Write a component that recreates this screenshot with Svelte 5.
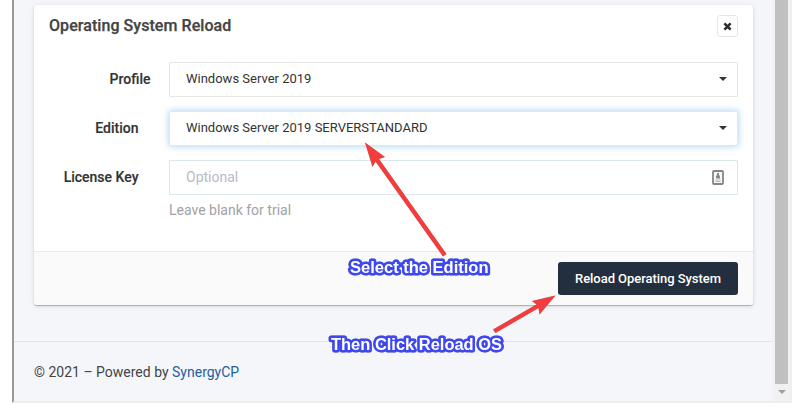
<script>
  const rows = [
    { label: 'Profile', value: 'Windows Server 2019', kind: 'select', wide: true },
    { label: 'Edition', value: 'Windows Server 2019 SERVERSTANDARD', kind: 'select', focused: true },
    { label: 'License Key', value: 'Optional', kind: 'input' }
  ];
</script>

<div class="page">
  <div class="frame">
    <main>
      <section class="card">
        <header>
          <h1>Operating System Reload</h1>
          <button class="close" aria-label="Close">
            <svg width="9" height="9" viewBox="0 0 9 9"><path d="M1.4 1.4 7.6 7.6M7.6 1.4 1.4 7.6" stroke="#2b2b2b" stroke-width="2.5" /></svg>
          </button>
        </header>
        <div class="form">
          {#each rows as row}
            <div class="row">
              <div class="label" class:wide={row.wide}>{row.label}</div>
              <div class="field {row.kind}" class:focused={row.focused}>
                <span>{row.value}</span>
                {#if row.kind === 'select'}
                  <svg class="caret" width="8" height="4" viewBox="0 0 8 4"><path d="M0 0H8L4 4Z" fill="#333" /></svg>
                {:else}
                  <svg class="key" width="12" height="15" viewBox="0 0 12 15">
                    <rect x="1" y="1" width="10" height="13" rx="1" fill="#f7f7f7" stroke="#858585" stroke-width="1.8" />
                    <path d="M5 3h2v2.500h1V8.500H4V5.500h1Z" fill="#888" />
                    <path d="M3.500 10h5M3.500 11.500h5" stroke="#bbb" />
                  </svg>
                {/if}
              </div>
            </div>
          {/each}
          <p class="help">Leave blank for trial</p>
        </div>
        <footer><button class="reload">Reload Operating System</button></footer>
      </section>
      <div class="copyright"><span>© 2021 – Powered by <a href="#top">SynergyCP</a></span></div>
    </main>
    <aside>
      <div class="thumb"></div>
      <svg width="8" height="4" viewBox="0 0 8 4"><path d="M0 0H8L4 4Z" fill="#a0a0a0" /></svg>
    </aside>
  </div>

  <svg class="notes" width="803" height="413" viewBox="0 0 803 413">
    <g class="arrows">
      <path d="M365 142.500 385 157 379 159 446.500 254 443 256.500 375.500 161.500 372.500 167Z" />
      <path d="M555.500 295.500 539.500 314.500 538.500 308 495.500 333 493 329.500 536.500 304.500 532 301Z" />
    </g>
    <text x="350" y="272.500" textLength="138.500" lengthAdjust="spacingAndGlyphs">Select the Edition</text>
    <text x="331" y="349.500" textLength="171" lengthAdjust="spacingAndGlyphs">Then Click Reload OS</text>
  </svg>
</div>

<style>
  :global(body) { margin: 0; background: #fff; }
  .page { position: relative; width: 803px; height: 413px; overflow: hidden; box-sizing: border-box; padding-left: 12px; font-family: Roboto, "Liberation Sans", sans-serif; color: #3a3f51; }
  .frame { box-sizing: border-box; width: 780px; height: 403px; display: flex; border: solid #eee; border-left-color: #999; border-width: 0 2px 2px; }
  main { width: 759px; height: 401px; background: #f5f6fa; padding-top: 5px; box-sizing: border-box; }
  .card { box-sizing: border-box; width: 719px; height: 300px; margin-left: 20px; background: #fff; border-radius: 3px; box-shadow: 0 1px 1px rgba(0,0,0,.25), 0 1px 5px rgba(0,0,0,.12); display: flex; flex-direction: column; }
  header { box-sizing: border-box; height: 57px; padding: 10px 15px 0; display: flex; justify-content: space-between; align-items: flex-start; }
  h1 { margin: 0; font-size: 16px; line-height: 22px; font-weight: 500; color: #444; letter-spacing: .06px; -webkit-text-stroke: .25px #444; }
  button { font-family: inherit; padding: 0; }
  .close { box-sizing: border-box; width: 21px; height: 22px; border: 1px solid #e6e6e6; border-radius: 3px; background: #fff; display: grid; place-items: center; }
  .form { height: 189px; display: flex; flex-direction: column; gap: 14px; }
  .row { display: flex; height: 35px; align-items: center; }
  .label { box-sizing: border-box; width: 135px; padding: 0 30.5px 2px 0; text-align: right; font-size: 14px; font-weight: 500; color: #333; white-space: nowrap; -webkit-text-stroke: .15px #333; }
  .label.wide { padding-right: 18.5px; }
  .field { box-sizing: border-box; width: 569px; height: 35px; border: 1px solid #e6e6e6; border-radius: 1px; padding: 0 10px 2px 16px; display: flex; align-items: center; justify-content: space-between; font-size: 13px; color: #333; background: #fff; }
  .caret { margin-top: 1px; }
  .field.focused { box-shadow: 0 0 7px rgba(102,175,233,.6); }
  .field.input { border-color: #dde6e9; color: #b7bac9; font-size: 14px; padding: 0 13px 0 16px; }
  .input span { padding-bottom: 2px; }
  .help { margin: -7px 0 0 135px; font-size: 14px; line-height: 16px; color: #a1a2a3; }
  footer { box-sizing: border-box; height: 54px; flex: none; padding: 10px 15px; border-top: 1px solid #e7e9eb; background: #fafafa; border-radius: 0 0 3px 3px; display: flex; justify-content: flex-end; }
  .reload { width: 180px; height: 33px; border: 0; border-radius: 3px; background: #232f3e; color: #fff; font-size: 13px; font-weight: 500; letter-spacing: -.05px; }
  .copyright { box-sizing: border-box; height: 60px; margin-top: 36px; padding: 0 20px; border-top: 1px solid #e2e4e9; display: flex; align-items: center; font-size: 14px; color: #444; }
  a { color: #23609e; text-decoration: none; }
  aside { width: 17px; height: 401px; background: #f1f1f1; display: flex; flex-direction: column; align-items: center; gap: 6px; }
  .thumb { width: 13px; height: 384px; background: #c0c0c0; }
  .notes { position: absolute; left: 0; top: 0; pointer-events: none; }
  .arrows { fill: #f33d3d; filter: drop-shadow(.7px .7px .5px rgba(0,0,0,.35)); }
  .notes text { font: bold 16px "Liberation Sans", Arial, sans-serif; fill: #fff; stroke: #3f48ef; stroke-width: 5px; stroke-linejoin: round; paint-order: stroke; filter: drop-shadow(.7px .7px .5px rgba(0,0,0,.35)); }
</style>
